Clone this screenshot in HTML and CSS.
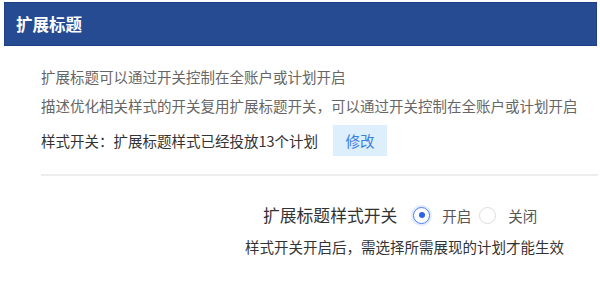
FILE: index.html
```html
<!DOCTYPE html>
<html lang="zh-CN">
<head>
<meta charset="utf-8">
<link rel="stylesheet" href="styles.css">
</head>
<body>
<div class="panel">
  <div class="header"><span class="title">扩展标题</span></div>
  <div class="content">
    <p class="desc">扩展标题可以通过开关控制在全账户或计划开启</p>
    <p class="desc">描述优化相关样式的开关复用扩展标题开关，可以通过开关控制在全账户或计划开启</p>
    <div class="status-row">
      <span class="status">样式开关：扩展标题样式已经投放13个计划</span>
      <button class="btn">修改</button>
    </div>
    <div class="divider"></div>
    <div class="form-row">
      <span class="label">扩展标题样式开关</span>
      <label class="radio"><span class="dot checked"></span><span class="radio-text">开启</span></label>
      <label class="radio"><span class="dot"></span><span class="radio-text">关闭</span></label>
    </div>
    <p class="help">样式开关开启后，需选择所需展现的计划才能生效</p>
  </div>
</div>
</body>
</html>
```
FILE: styles.css
```css
* { box-sizing: border-box; }
body {
  margin: 0;
  background: #fff;
  font-family: "Noto Sans CJK SC", "Noto Sans", sans-serif;
  color: #333;
}
.panel { width: 600px; }
.header {
  margin: 2px 3px 0 4px;
  height: 44px;
  background: #264b93;
  border: 1px solid #1d3f86;
  display: flex;
  align-items: center;
  padding-left: 11px;
}
.title {
  color: #fff;
  font-size: 16.5px;
  font-weight: bold;
  line-height: 20px;
}
.content {
  padding: 16px 2px 0 41px;
}
.desc {
  margin: 0;
  font-size: 14.5px;
  line-height: 29px;
  color: #666;
  white-space: nowrap;
}
.status-row {
  display: flex;
  align-items: center;
  margin-top: 5px;
  height: 31px;
}
.status {
  font-size: 14.5px;
  color: #333;
  white-space: nowrap;
}
.btn {
  margin-left: 15px;
  width: 54px;
  height: 31px;
  border: none;
  background: #ddeefc;
  color: #3a7ee0;
  font-family: inherit;
  font-size: 14.5px;
  padding: 0;
}
.divider {
  margin-top: 18px;
  height: 2px;
  background: #eeeeee;
}
.form-row {
  display: flex;
  align-items: center;
  height: 24px;
  margin-top: 27px;
  margin-left: 222px;
}
.label {
  font-size: 16.8px;
  color: #333;
  margin-right: 16px;
  white-space: nowrap;
}
.radio {
  display: flex;
  align-items: center;
  margin-right: 8px;
}
.dot {
  width: 17px;
  height: 17px;
  border-radius: 50%;
  border: 1px solid #dcdcdc;
  background: #fff;
  position: relative;
}
.dot.checked {
  border-color: #4d7ef0;
  box-shadow: 0 0 0 2px #e3ebfd;
}
.dot.checked::after {
  content: "";
  position: absolute;
  left: 4.5px;
  top: 4.5px;
  width: 6px;
  height: 6px;
  border-radius: 50%;
  background: #2f62e8;
}
.radio-text {
  margin-left: 12px;
  font-size: 14.5px;
  color: #555;
}
.help {
  margin: 10px 0 0 204px;
  font-size: 14.5px;
  line-height: 20px;
  color: #333;
  white-space: nowrap;
}
```
